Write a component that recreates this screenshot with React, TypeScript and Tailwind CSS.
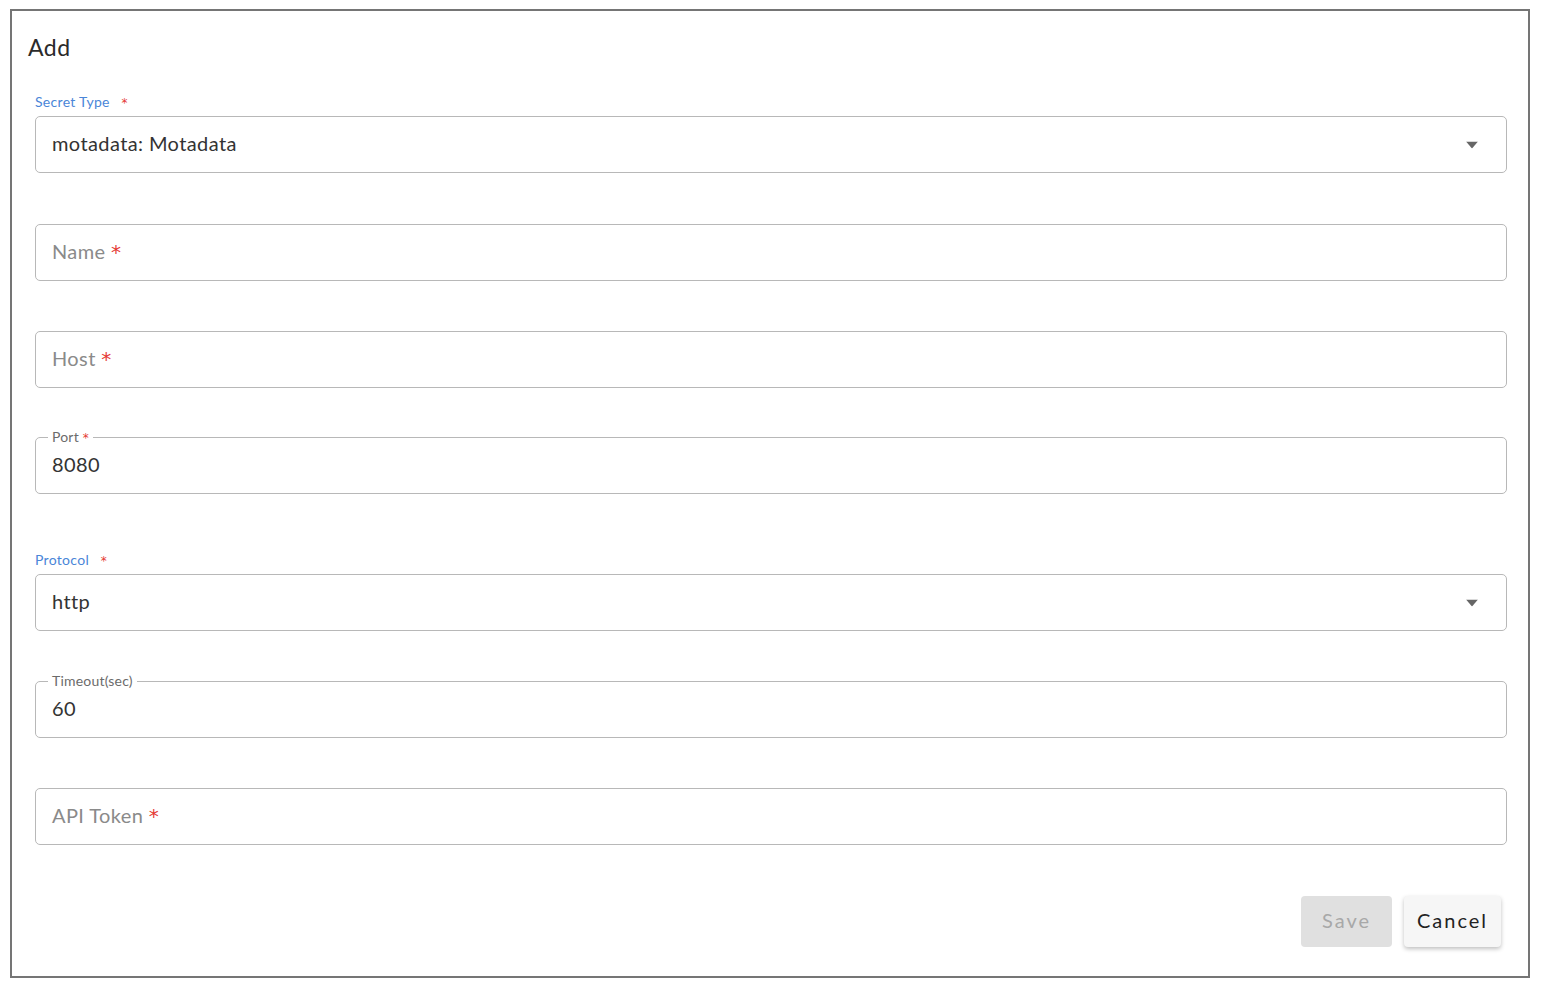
import { ReactNode } from 'react'

const font = { fontFamily: 'Lato, "Noto Sans", sans-serif' }

function Req() {
  return <span className="text-[#e53935] [font-family:'DejaVu_Sans',sans-serif]">*</span>
}

function Caret() {
  return (
    <svg width="12" height="7" viewBox="0 0 12 7" className="absolute right-[28px] top-1/2 -translate-y-1/2">
      <path d="M0 0h12L6 7z" fill="#666" />
    </svg>
  )
}

function SelectField({ label, value }: { label: string; value: string }) {
  return (
    <div>
      <div className="text-[14px] leading-4 tracking-[0.3px] text-[#4a86d8]">
        {label}&nbsp;&nbsp; <span className="text-[12px]"><Req /></span>
      </div>
      <div className="relative mt-[5px] flex h-[57px] items-center rounded-[5px] border border-[#b8b8b8] pb-[3px] pl-4 text-[20px] tracking-[0.4px] text-[#333]">
        {value}
        <Caret />
      </div>
    </div>
  )
}

function EmptyField({ children }: { children: ReactNode }) {
  return (
    <div className="flex h-[57px] items-center rounded-[5px] border border-[#b8b8b8] pb-[3px] pl-4 text-[20px] tracking-[0.4px] text-[#8a8a8a]">
      <span>{children}</span>
    </div>
  )
}

function FilledField({ label, value, required }: { label: string; value: string; required?: boolean }) {
  return (
    <div className="relative flex h-[57px] items-center rounded-[5px] border border-[#b8b8b8] pb-[3px] pl-4 text-[20px] tracking-[0.4px] text-[#333]">
      <span className="absolute -top-[9px] left-[12px] bg-white px-[4px] text-[14px] leading-4 tracking-[0.2px] text-[#6b6b6b]">
        {label}
        {required && (
          <>
            {' '}
            <span className="text-[12px]"><Req /></span>
          </>
        )}
      </span>
      {value}
    </div>
  )
}

export default function App() {
  return (
    <div className="h-[986px] w-[1542px] bg-white pl-[10px] pt-[9px]" style={font}>
      <div className="flex h-[969px] w-[1520px] flex-col border-2 border-[#757575] pl-[16px] pr-[21px] pt-[21px]">
        <div className="h-[30px] text-[23px] leading-[30px] tracking-[0.5px] text-[#2b2b2b]">Add</div>

        <div className="ml-[7px] mt-[32px] flex flex-col">
          <SelectField label="Secret Type" value="motadata: Motadata" />

          <div className="mt-[51px]">
            <EmptyField>
              Name <Req />
            </EmptyField>
          </div>

          <div className="mt-[50px]">
            <EmptyField>
              Host <Req />
            </EmptyField>
          </div>

          <div className="mt-[49px]">
            <FilledField label="Port" value="8080" required />
          </div>

          <div className="mt-[58px]">
            <SelectField label="Protocol" value="http" />
          </div>

          <div className="mt-[50px]">
            <FilledField label="Timeout(sec)" value="60" />
          </div>

          <div className="mt-[50px]">
            <EmptyField>
              API Token <Req />
            </EmptyField>
          </div>

          <div className="mt-[51px] flex justify-end gap-3 pr-[6px]">
            <button className="h-[51px] w-[91px] rounded bg-[#e0e0e0] pb-[3px] text-[20px] tracking-[2px] text-[#a8a8a8]">
              Save
            </button>
            <button className="h-[51px] w-[97px] rounded bg-[#f6f6f6] pb-[3px] text-[20px] tracking-[2px] text-[#222] shadow-[0_2px_4px_rgba(0,0,0,0.25)]">
              Cancel
            </button>
          </div>
        </div>
      </div>
    </div>
  )
}
